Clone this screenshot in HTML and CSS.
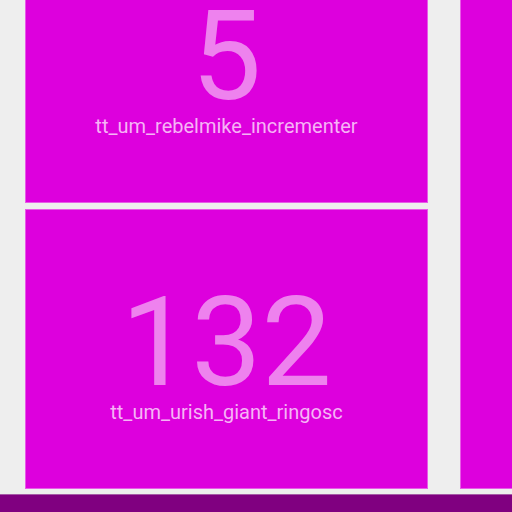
FILE: index.html
```html
<!DOCTYPE html>
<html>
<head>
<meta charset="utf-8">
<link rel="stylesheet" href="styles.css">
</head>
<body>
<main class="board">
  <div class="grid">
    <div class="tile">
      <div class="count">5</div>
      <div class="name">tt_um_rebelmike_incrementer</div>
    </div>
    <div class="tile tall"></div>
    <div class="tile">
      <div class="count">132</div>
      <div class="name">tt_um_urish_giant_ringosc</div>
    </div>
  </div>
</main>
<footer class="bar"></footer>
</body>
</html>
```
FILE: styles.css
```css
html, body {
  margin: 0;
  padding: 0;
  height: 100%;
}
body {
  background: #eeeeee;
  display: flex;
  flex-direction: column;
  font-family: Roboto, "Liberation Sans", sans-serif;
  overflow: hidden;
}
.board {
  flex: 1;
  overflow: hidden;
  padding-left: 25px;
}
.grid {
  display: grid;
  grid-template-columns: 403px 403px;
  grid-template-rows: 280px 280px;
  column-gap: 32px;
  row-gap: 6px;
  margin-top: -77px;
}
.tile {
  box-sizing: border-box;
  background: #dd00dd;
  border: 1px solid #e85ae8;
  color: #ee82ee;
  display: flex;
  flex-direction: column;
  align-items: center;
  justify-content: center;
  padding-top: 14px;
}
.tall {
  grid-column: 2;
  grid-row: 1 / span 2;
}
.count {
  font-size: 125px;
  line-height: 110px;
}
.name {
  font-size: 20px;
  line-height: 24px;
  margin-top: 2px;
  color: #f6b4f6;
}
.bar {
  height: 17px;
  background: #800080;
  border-top: 1px solid #a85aa8;
}
```
